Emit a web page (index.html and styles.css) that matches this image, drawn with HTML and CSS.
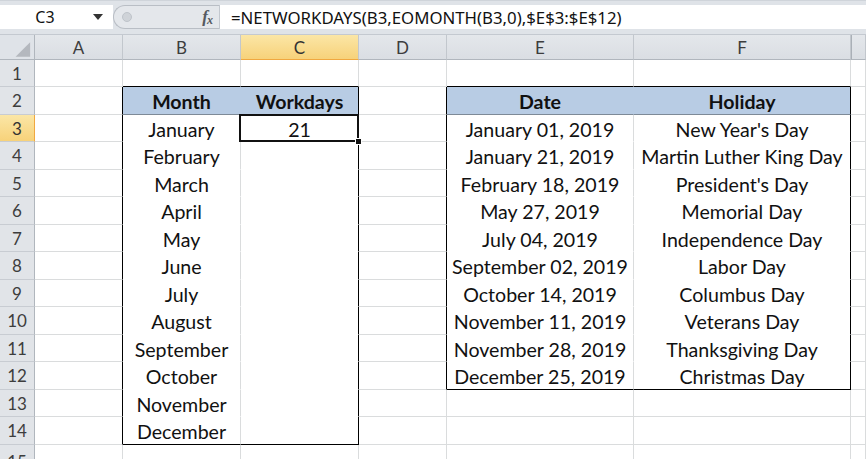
FILE: index.html
```html
<!DOCTYPE html>
<html>
<head>
<meta charset="utf-8">
<link rel="stylesheet" href="styles.css">
</head>
<body>
<div class="app">
  <div class="fbar">
    <div class="namebox">
      <span class="ref">C3</span>
      <svg class="dd" width="10" height="6" viewBox="0 0 10 6"><polygon points="0,0 10,0 5,6" fill="#333"/></svg>
    </div>
    <div class="fxzone">
      <span class="knob"></span>
      <span class="fx">f<span class="sx">x</span></span>
    </div>
    <div class="input">=NETWORKDAYS(B3,EOMONTH(B3,0),$E$3:$E$12)</div>
  </div>
  <div class="sheet">
    <!-- column headers -->
    <div class="corner"><svg width="35" height="25" viewBox="0 0 35 25"><polygon points="31,7 31,22 16,22" fill="#b4b8be"/></svg></div>
    <div class="ch">A</div><div class="ch">B</div><div class="ch hl">C</div><div class="ch">D</div><div class="ch">E</div><div class="ch">F</div><div class="ch last"></div>
    <!-- row 1 -->
    <div class="rh">1</div><div class="c"></div><div class="c B"></div><div class="c B"></div><div class="c"></div><div class="c B"></div><div class="c B"></div><div class="c"></div>
    <!-- row 2 -->
    <div class="rh">2</div><div class="c L"></div><div class="c th thi">Month</div><div class="c th L">Workdays</div><div class="c L"></div><div class="c th thi">Date</div><div class="c th L">Holiday</div><div class="c"></div>
    <!-- row 3 -->
    <div class="rh hl">3</div><div class="c L"></div><div class="c in">January</div><div class="c in L active">21</div><div class="c L"></div><div class="c in">January 01, 2019</div><div class="c in L">New Year's Day</div><div class="c"></div>
    <!-- row 4 -->
    <div class="rh">4</div><div class="c L"></div><div class="c in">February</div><div class="c in L"></div><div class="c L"></div><div class="c in">January 21, 2019</div><div class="c in L">Martin Luther King Day</div><div class="c"></div>
    <!-- row 5 -->
    <div class="rh">5</div><div class="c L"></div><div class="c in">March</div><div class="c in L"></div><div class="c L"></div><div class="c in">February 18, 2019</div><div class="c in L">President's Day</div><div class="c"></div>
    <!-- row 6 -->
    <div class="rh">6</div><div class="c L"></div><div class="c in">April</div><div class="c in L"></div><div class="c L"></div><div class="c in">May 27, 2019</div><div class="c in L">Memorial Day</div><div class="c"></div>
    <!-- row 7 -->
    <div class="rh">7</div><div class="c L"></div><div class="c in">May</div><div class="c in L"></div><div class="c L"></div><div class="c in">July 04, 2019</div><div class="c in L">Independence Day</div><div class="c"></div>
    <!-- row 8 -->
    <div class="rh">8</div><div class="c L"></div><div class="c in">June</div><div class="c in L"></div><div class="c L"></div><div class="c in">September 02, 2019</div><div class="c in L">Labor Day</div><div class="c"></div>
    <!-- row 9 -->
    <div class="rh">9</div><div class="c L"></div><div class="c in">July</div><div class="c in L"></div><div class="c L"></div><div class="c in">October 14, 2019</div><div class="c in L">Columbus Day</div><div class="c"></div>
    <!-- row 10 -->
    <div class="rh">10</div><div class="c L"></div><div class="c in">August</div><div class="c in L"></div><div class="c L"></div><div class="c in">November 11, 2019</div><div class="c in L">Veterans Day</div><div class="c"></div>
    <!-- row 11 -->
    <div class="rh">11</div><div class="c L"></div><div class="c in">September</div><div class="c in L"></div><div class="c L"></div><div class="c in">November 28, 2019</div><div class="c in L">Thanksgiving Day</div><div class="c"></div>
    <!-- row 12 -->
    <div class="rh">12</div><div class="c L"></div><div class="c in">October</div><div class="c in L"></div><div class="c L"></div><div class="c in B">December 25, 2019</div><div class="c in L B">Christmas Day</div><div class="c"></div>
    <!-- row 13 -->
    <div class="rh">13</div><div class="c L"></div><div class="c in">November</div><div class="c in L"></div><div class="c"></div><div class="c"></div><div class="c"></div><div class="c"></div>
    <!-- row 14 -->
    <div class="rh">14</div><div class="c L"></div><div class="c in B">December</div><div class="c in L B"></div><div class="c"></div><div class="c"></div><div class="c"></div><div class="c"></div>
    <!-- row 15 -->
    <div class="rh r15">15</div><div class="c"></div><div class="c"></div><div class="c"></div><div class="c"></div><div class="c"></div><div class="c"></div><div class="c"></div>
  </div>
</div>
</body>
</html>
```

FILE: styles.css
```css
html, body {
  margin: 0;
  padding: 0;
  background: #ffffff;
  overflow: hidden;
}

.app {
  width: 866px;
  height: 459px;
  overflow: hidden;
  display: flex;
  flex-direction: column;
}

/* formula bar */
.fbar {
  height: 35px;
  box-sizing: border-box;
  padding-top: 4px;
  padding-bottom: 5px;
  background: #dfe3e8;
  border-top: 1px solid #cfd4da;
  border-bottom: 1px solid #c4c9d0;
  display: flex;
  flex-shrink: 0;
}

.namebox {
  width: 113px;
  background: #ffffff;
  display: flex;
  align-items: center;
  font-family: "Noto Sans", "Open Sans", sans-serif;
  font-size: 16px;
  color: #111;
}

.namebox .ref {
  width: 90px;
  text-align: center;
}

.namebox .dd {
  margin-left: 3px;
}

.fxzone {
  width: 106px;
  box-sizing: border-box;
  background: #e4e7eb;
  border: 1px solid #b9bec5;
  border-right: none;
  border-radius: 13px 0 0 13px;
  display: flex;
  align-items: center;
}

.knob {
  width: 8px;
  height: 8px;
  border-radius: 50%;
  background: #cfd3d8;
  border: 1px solid #bfc4ca;
  margin-left: 8px;
}

.fx {
  margin-left: auto;
  margin-right: 7px;
  font-family: "Liberation Serif", serif;
  font-style: italic;
  font-weight: bold;
  font-size: 17px;
  color: #555a60;
  letter-spacing: -1px;
}

.fx .sx {
  font-size: 12px;
  position: relative;
  top: 2px;
}

.input {
  flex: 1;
  background: #ffffff;
  border-left: 1px solid #c3c8cf;
  padding-left: 11px;
  font-family: "Noto Sans", "Open Sans", sans-serif;
  font-size: 16.8px;
  line-height: 25px;
  color: #111;
  white-space: nowrap;
}

/* sheet grid */
.sheet {
  display: grid;
  grid-template-columns: 35px 88px 118px 118px 88px 187px 217px 1fr;
  grid-template-rows: 25px 27px 28px 27px 28px 27px 28px 27px 28px 27px 28px 27px 28px 27px 28px 1fr;
  flex: 1;
  font-family: "Lato", "Open Sans", sans-serif;
}

.sheet > div {
  box-sizing: border-box;
  display: flex;
  align-items: center;
  justify-content: center;
  white-space: nowrap;
}

.corner {
  background: #dfe3e8;
  border-right: 1px solid #b0b6bd;
  border-bottom: 1px solid #b0b6bd;
}

.ch {
  background: linear-gradient(#e4e7eb, #dadee3);
  border-right: 1px solid #c2c7cd;
  border-bottom: 1px solid #b0b6bd;
  font-size: 17px;
  color: #3d3d3d;
}

.ch.last {
  border-left: 1px solid #aab0b7;
}

.rh {
  background: #e1e4e8;
  border-right: 1px solid #b0b6bd;
  border-bottom: 1px solid #c8ccd2;
  font-size: 17px;
  color: #3d3d3d;
}

.sheet > .rh.r15 {
  align-items: flex-start;
  padding-top: 6px;
}

.ch.hl,
.rh.hl {
  background: linear-gradient(#fbe6a6, #f7d27a);
  color: #333;
}

.ch.hl {
  border-bottom: 1px solid #f0a840;
}

.rh.hl {
  border-right: 1px solid #f0a840;
}

.c {
  background: #ffffff;
  border-right: 1px solid #dadcdd;
  border-bottom: 1px solid #dadcdd;
  font-size: 19.6px;
  color: #111;
  padding-top: 2px;
}

.c.th {
  background: #b8cce4;
  font-weight: bold;
  border-bottom: 1px solid #7e8a97;
}

.c.thi {
  border-right-color: #b8cce4;
}

.c.in {
  border-bottom-color: #ffffff;
}

.c.L {
  border-right: 1px solid #000000;
}

.c.B {
  border-bottom: 1px solid #000000;
}

.c.active {
  position: relative;
}

.c.active::after {
  content: "";
  position: absolute;
  left: -2px;
  top: -1px;
  right: -1px;
  bottom: -1px;
  border: 2px solid #111;
}

.c.active::before {
  content: "";
  position: absolute;
  right: -4px;
  bottom: -4px;
  width: 5px;
  height: 5px;
  background: #111;
  border: 1px solid #fff;
  z-index: 2;
}
```
